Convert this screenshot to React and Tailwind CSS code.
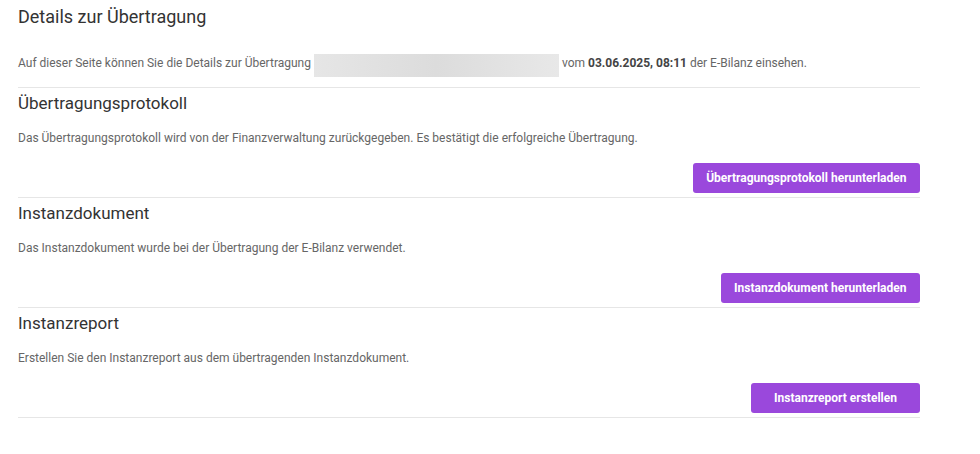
const sections = [
  {
    title: "Übertragungsprotokoll",
    text: "Das Übertragungsprotokoll wird von der Finanzverwaltung zurückgegeben. Es bestätigt die erfolgreiche Übertragung.",
    button: "Übertragungsprotokoll herunterladen",
  },
  {
    title: "Instanzdokument",
    text: "Das Instanzdokument wurde bei der Übertragung der E-Bilanz verwendet.",
    button: "Instanzdokument herunterladen",
  },
  {
    title: "Instanzreport",
    text: "Erstellen Sie den Instanzreport aus dem übertragenden Instanzdokument.",
    button: "Instanzreport erstellen",
  },
];

export default function App() {
  return (
    <div
      className="min-h-screen bg-white"
      style={{ fontFamily: "Roboto, 'Noto Sans', sans-serif" }}
    >
      <div className="w-[902px] ml-[18px] pt-[4px]">
        {/* Header */}
        <h1 className="text-[18px] leading-[26px] text-[#333333]">Details zur Übertragung</h1>
        <p className="mt-[24px] h-[18px] text-[12px] leading-[18px] text-[#666666]">
          Auf dieser Seite können Sie die Details zur Übertragung{" "}
          <span className="inline-block align-middle w-[245px] h-[23px] -my-[4px] translate-y-[2px] bg-gradient-to-r from-[#e6e6e6] via-[#dcdcdc] to-[#e8e8e8]"></span>{" "}
          vom <strong className="font-bold text-[#444444]">03.06.2025, 08:11</strong> der E-Bilanz einsehen.
        </p>
        <div className="mt-[15px] border-b border-[#e6e6e6]"></div>

        {/* Sections */}
        {sections.map((s) => (
          <section key={s.title} className="pt-[3px] border-b border-[#e6e6e6]">
            <h2 className="text-[17px] leading-[24px] text-[#333333]">{s.title}</h2>
            <p className="mt-[14px] text-[12px] leading-[18px] text-[#666666]">{s.text}</p>
            <div className="mt-[16px] mb-[4px] flex justify-end">
              <button className="h-[30px] min-w-[169px] px-[13.5px] rounded-[3px] bg-[#9a48dc] text-white text-[12px] font-bold">
                {s.button}
              </button>
            </div>
          </section>
        ))}
      </div>
    </div>
  );
}
